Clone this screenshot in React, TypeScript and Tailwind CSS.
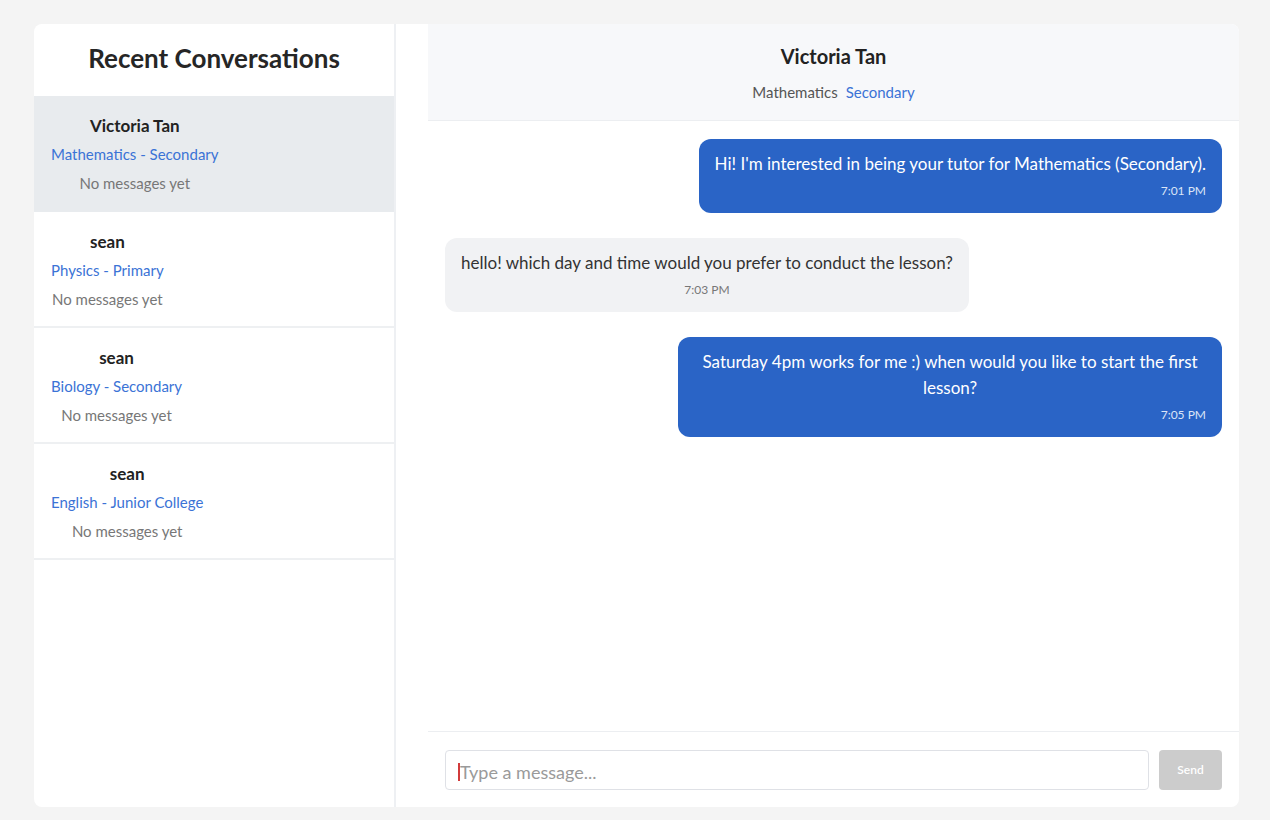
const conversations = [
  { name: 'Victoria Tan', subject: 'Mathematics - Secondary', active: true },
  { name: 'sean', subject: 'Physics - Primary', active: false },
  { name: 'sean', subject: 'Biology - Secondary', active: false },
  { name: 'sean', subject: 'English - Junior College', active: false },
]

const messages = [
  { mine: true, text: "Hi! I'm interested in being your tutor for Mathematics (Secondary).", time: '7:01 PM' },
  { mine: false, text: 'hello! which day and time would you prefer to conduct the lesson?', time: '7:03 PM' },
  { mine: true, text: 'Saturday 4pm works for me :) when would you like to start the first lesson?', time: '7:05 PM' },
]

export default function App() {
  return (
    <div className="min-h-[820px] w-full bg-[#f4f4f4] pt-[24px] pl-[34px]" style={{ fontFamily: 'Lato, "Open Sans", sans-serif' }}>
      <div className="flex h-[783px] w-[1205px] overflow-hidden rounded-lg bg-white">
        {/* sidebar */}
        <aside className="flex w-[362px] shrink-0 flex-col border-r-2 border-[#eef0f3]">
          <div className="flex h-[72px] items-center justify-center pb-[3px]">
            <h1 className="text-[26px] font-bold text-[#262626]">Recent Conversations</h1>
          </div>
          {conversations.map((c, i) => (
            <div
              key={i}
              className={`h-[116px] border-b-2 pl-[17px] pt-[16px] ${
                c.active ? 'border-[#e8ebee] bg-[#e8ebee]' : 'border-[#eef0f2] bg-white'
              }`}
            >
              <div className="w-fit text-center">
                <div className="text-[17px] font-bold leading-[28px] text-[#222]">{c.name}</div>
                <div className="text-[15px] leading-[29px] text-[#3b73d6]">{c.subject}</div>
                <div className="text-[15px] leading-[28px] text-[#777]">No messages yet</div>
              </div>
            </div>
          ))}
        </aside>

        {/* chat */}
        <section className="flex flex-1 pl-8">
          <div className="flex flex-1 flex-col">
            <header className="flex h-[97px] flex-col items-center border-b border-[#eceef1] bg-[#f7f8fa] pt-[20px]">
              <div className="text-[20px] font-bold leading-[24px] text-[#222]">Victoria Tan</div>
              <div className="mt-[14px] flex gap-2 text-[15px] leading-[20px]">
                <span className="text-[#555]">Mathematics</span>
                <span className="text-[#3b73d6]">Secondary</span>
              </div>
            </header>

            <div className="flex flex-1 flex-col gap-[25px] px-[17px] pt-[18px]">
              {messages.map((m, i) => (
                <div key={i} className={`flex ${m.mine ? 'justify-end' : 'justify-start'}`}>
                  <div
                    className={`max-w-[70%] rounded-xl px-4 pt-[12px] pb-[14px] text-center ${
                      m.mine ? 'bg-[#2a64c6] text-white' : 'bg-[#f1f2f4] text-[#333]'
                    }`}
                  >
                    <div className="text-[17px] leading-[26px]">{m.text}</div>
                    <div
                      className={`mt-[6px] text-[12px] leading-4 ${
                        m.mine ? 'text-right text-[#dbe5f7]' : 'text-center text-[#777]'
                      }`}
                    >
                      {m.time}
                    </div>
                  </div>
                </div>
              ))}
            </div>

            <div className="flex gap-[10px] border-t border-[#eceef1] px-[17px] pt-[18px] pb-[17px]">
              <div className="relative flex-1">
                <span className="absolute left-[13px] top-[13px] h-[18px] w-[2px] bg-[#d23b3b]" />
                <input
                  className="h-10 w-full rounded border border-[#dfe1e6] pl-[14px] pt-[4px] text-[18px] text-[#333] outline-none placeholder:text-[#9a9a9a]"
                  placeholder="Type a message..."
                />
              </div>
              <button className="h-10 w-[63px] rounded bg-[#cccccc] text-[12px] font-semibold text-white">Send</button>
            </div>
          </div>
        </section>
      </div>
    </div>
  )
}
